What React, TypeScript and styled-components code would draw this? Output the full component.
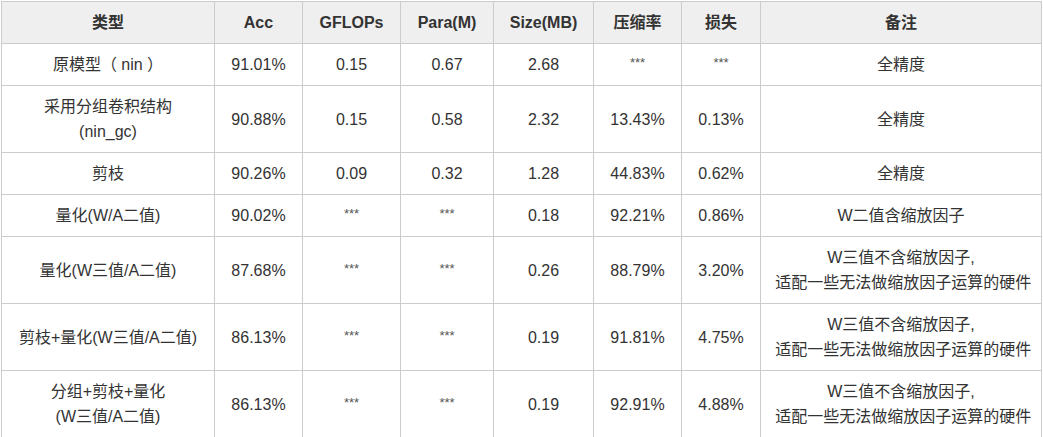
import React from "react";
import styled, { createGlobalStyle } from "styled-components";

const GlobalStyle = createGlobalStyle`
  html, body { margin: 0; padding: 0; background: #ffffff; }
  body {
    font-family: "Liberation Sans", Arial, "Noto Sans CJK SC", sans-serif;
    color: #333333;
  }
`;

const Page = styled.div`
  padding: 1px 0 0 1px;
`;

const Table = styled.table`
  border-collapse: collapse;
  table-layout: fixed;
  width: 1041px;
  font-size: 16px;
  line-height: 25px;
`;

const HeadCell = styled.th`
  background: #efefef;
  border: 1px solid #cccccc;
  padding: 8px 4px;
  font-weight: bold;
  color: #333333;
  text-align: center;
  white-space: nowrap;
`;

const Cell = styled.td`
  border: 1px solid #cccccc;
  padding: 8px 4px;
  text-align: center;
  vertical-align: middle;
  color: #333333;
  white-space: nowrap;
`;

const Line = styled.div`
  height: 25px;
  line-height: 25px;
  overflow: visible;
`;

const Stars = styled.span`
  font-size: 13px;
  position: relative;
  top: -3px;
  color: #555555;
`;

const cols = [213, 88, 98, 93, 100, 88, 79, 281];
const headers = ["类型", "Acc", "GFLOPs", "Para(M)", "Size(MB)", "压缩率", "损失", "备注"];

type Row = string[][];

const REMARK2 = ["W三值不含缩放因子,", "\u00a0适配一些无法做缩放因子运算的硬件"];

const rows: Row[] = [
  [["原模型（ nin ）"], ["91.01%"], ["0.15"], ["0.67"], ["2.68"], ["***"], ["***"], ["全精度"]],
  [["采用分组卷积结构", "(nin_gc)"], ["90.88%"], ["0.15"], ["0.58"], ["2.32"], ["13.43%"], ["0.13%"], ["全精度"]],
  [["剪枝"], ["90.26%"], ["0.09"], ["0.32"], ["1.28"], ["44.83%"], ["0.62%"], ["全精度"]],
  [["量化(W/A二值)"], ["90.02%"], ["***"], ["***"], ["0.18"], ["92.21%"], ["0.86%"], ["W二值含缩放因子"]],
  [["量化(W三值/A二值)"], ["87.68%"], ["***"], ["***"], ["0.26"], ["88.79%"], ["3.20%"], REMARK2],
  [["剪枝+量化(W三值/A二值)"], ["86.13%"], ["***"], ["***"], ["0.19"], ["91.81%"], ["4.75%"], REMARK2],
  [["分组+剪枝+量化", "(W三值/A二值)"], ["86.13%"], ["***"], ["***"], ["0.19"], ["92.91%"], ["4.88%"], REMARK2],
];

function Content({ lines }: { lines: string[] }) {
  return (
    <>
      {lines.map((l, i) => (
        <Line key={i}>{l === "***" ? <Stars>***</Stars> : l}</Line>
      ))}
    </>
  );
}

export default function App() {
  return (
    <>
      <GlobalStyle />
      <Page>
        <Table>
          <colgroup>
            {cols.map((w, i) => (
              <col key={i} style={{ width: w }} />
            ))}
          </colgroup>
          <thead>
            <tr>
              {headers.map((h) => (
                <HeadCell key={h}>
                  <Line>{h}</Line>
                </HeadCell>
              ))}
            </tr>
          </thead>
          <tbody>
            {rows.map((r, ri) => (
              <tr key={ri}>
                {r.map((c, ci) => (
                  <Cell key={ci}>
                    <Content lines={c} />
                  </Cell>
                ))}
              </tr>
            ))}
          </tbody>
        </Table>
      </Page>
    </>
  );
}
